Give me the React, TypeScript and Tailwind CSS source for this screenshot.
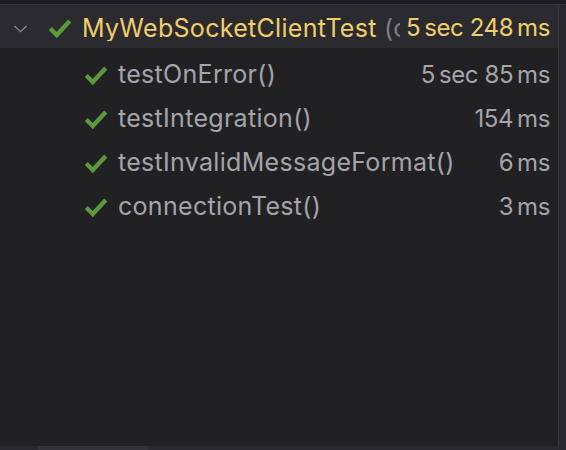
import { useState } from 'react'

type Test = { name: string; time: string }

const tests: Test[] = [
  { name: 'testOnError()', time: '5\u2009sec 85\u2009ms' },
  { name: 'testIntegration()', time: '154\u2009ms' },
  { name: 'testInvalidMessageFormat()', time: '6\u2009ms' },
  { name: 'connectionTest()', time: '3\u2009ms' },
]

function Check({ className }: { className?: string }) {
  return (
    <svg viewBox="0 0 24 24" className={className} fill="none">
      <path d="M3 12.5 L9 18.5 L21 5.5" stroke="#5b9a3b" strokeWidth="4" strokeLinecap="butt" strokeLinejoin="miter" />
    </svg>
  )
}

export default function App() {
  const [open, setOpen] = useState(true)

  return (
    <div
      className="w-[566px] h-[450px] bg-[#212023] flex flex-col overflow-hidden"
      style={{ fontFamily: 'Inter, "Noto Sans", sans-serif' }}
    >
      <div className="h-[5px] bg-[#1e1d21] border-b border-[#333237] shrink-0" />
      <div className="flex flex-1 min-h-0">
        <div className="flex-1 min-w-0 flex flex-col">
          {/* root row */}
          <div className="h-[43px] bg-[#2b2a2f] flex items-center pt-[3px]">
            <button onClick={() => setOpen(!open)} className="w-[40px] flex justify-center pl-[1px] pt-[1px] shrink-0">
              <svg viewBox="0 0 16 9" className="w-[15px] h-[8px]" fill="none">
                <path d="M1.2 1.2 L8 7.6 L14.8 1.2" stroke="#8d8c91" strokeWidth="1.4" />
              </svg>
            </button>
            <Check className="w-[26px] h-[26px] ml-[7px] shrink-0" />
            <div className="ml-[9px] min-w-0 flex-1 whitespace-nowrap overflow-hidden text-[25px] tracking-[0.3px] leading-none">
              <span className="text-[#f0cf6a]">MyWebSocketClientTest</span>
              <span className="text-[#7e7d82]"> (com.example)</span>
            </div>
            <span className="text-[#f0cf6a] pl-[6px] pr-[8px] whitespace-nowrap shrink-0 text-[24px] tracking-[-0.4px] leading-none">
              5{'\u2009'}sec 248{'\u2009'}ms
            </span>
          </div>
          {open && (
            <div className="flex flex-col pt-[5px]">
              {tests.map((t) => (
                <div key={t.name} className="h-[44px] flex items-center">
                  <Check className="w-[26px] h-[26px] ml-[83px] shrink-0" />
                  <span className="ml-[9px] text-[#a5a4a9] flex-1 whitespace-nowrap text-[25px] tracking-[0.3px]">{t.name}</span>
                  <span className="text-[#a5a4a9] pr-[8px] whitespace-nowrap text-[24px] tracking-[-0.4px]">{t.time}</span>
                </div>
              ))}
            </div>
          )}
        </div>
        <div className="w-[8px] shrink-0 bg-[#29282d] border-l border-[#38373c]" />
      </div>
      <div className="h-[4px] shrink-0 flex">
        <div className="w-[38px] bg-[#2a292e]" />
        <div className="w-[110px] bg-[#343338]" />
        <div className="flex-1 bg-[#2a292e]" />
      </div>
    </div>
  )
}
